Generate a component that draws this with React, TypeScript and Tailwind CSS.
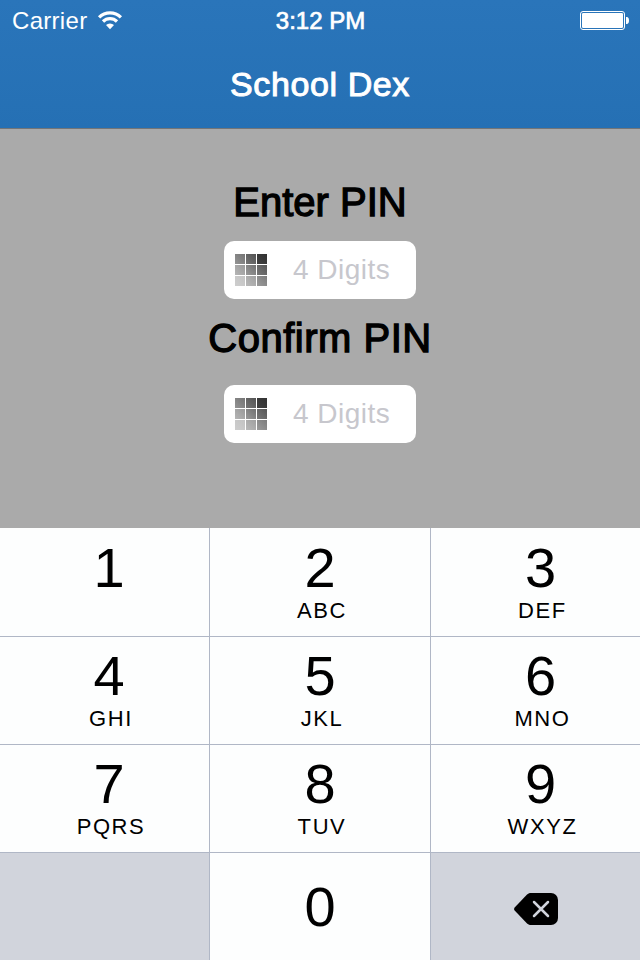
const keys = [
    [
        { digit: '1', letters: '' },
        { digit: '2', letters: 'ABC' },
        { digit: '3', letters: 'DEF' },
    ],
    [
        { digit: '4', letters: 'GHI' },
        { digit: '5', letters: 'JKL' },
        { digit: '6', letters: 'MNO' },
    ],
    [
        { digit: '7', letters: 'PQRS' },
        { digit: '8', letters: 'TUV' },
        { digit: '9', letters: 'WXYZ' },
    ],
];

const columnStyles = ['pl-[9px]', 'border-x border-[#b0b7c6]', 'pl-[10px]'];

const tiles = ['#747474', '#535353', '#323232', '#999999', '#717171', '#575757', '#c3c3c3', '#a0a0a0', '#7c7c7c'];
const tilesEnd = ['#949494', '#747474', '#414141', '#b5b5b5', '#999999', '#777777', '#cecece', '#b9b9b9', '#9b9b9b'];

function WifiIcon() {
    return (
        <svg width="26" height="20" viewBox="0 0 26 20" fill="none" stroke="white" strokeWidth="3.2">
            <path d="M2.1 7.3a15.4 15.4 0 0 1 21.8 0" />
            <path d="M6 11.5a9.9 9.9 0 0 1 14 0" />
            <path d="M13 19.2l-4-4.1a5.7 5.7 0 0 1 8 0z" fill="white" stroke="none" />
        </svg>
    );
}

function BatteryIcon() {
    return (
        <svg width="50" height="20" viewBox="0 0 50 20" fill="none">
            <rect x="0.5" y="0.5" width="44" height="18" rx="2.5" stroke="white" />
            <rect x="2" y="2" width="41" height="15" rx="1.2" fill="white" />
            <path d="M46 6h.8c1.4 0 2.2 1.4 2.2 3.5s-.8 3.5-2.2 3.5H46z" fill="white" />
        </svg>
    );
}

function KeypadIcon() {
    return (
        <svg width="32" height="32" viewBox="0 0 32 32">
            {tiles.map((color, i) => (
                <g key={i}>
                    <linearGradient id={`tile${i}`} x1="1" y1="0" x2="0" y2="1">
                        <stop offset="0" stopColor={color} />
                        <stop offset="1" stopColor={tilesEnd[i]} />
                    </linearGradient>
                    <rect x={(i % 3) * 11} y={Math.floor(i / 3) * 11} width="10" height="10" fill={`url(#tile${i})`} />
                </g>
            ))}
        </svg>
    );
}

function DeleteIcon() {
    return (
        <svg width="44" height="32" viewBox="0 0 44 32" fill="none">
            <path d="M17 0h20a7 7 0 0 1 7 7v18a7 7 0 0 1-7 7H17c-1.7 0-3-.6-4.2-1.8L.9 17.8c-1.1-1.2-1.1-2.4 0-3.6L12.8 1.8C14 .6 15.3 0 17 0z" fill="black" />
            <path d="M20 9l14 14M34 9L20 23" stroke="#d1d4dc" strokeWidth="2.5" strokeLinecap="round" />
        </svg>
    );
}

function PinField() {
    return (
        <label className="flex h-[58px] w-48 items-center rounded-[10px] bg-white pl-[11px]">
            <KeypadIcon />
            <input
                type="text"
                inputMode="numeric"
                maxLength={4}
                placeholder="4 Digits"
                className="ml-[26px] h-10 w-28 bg-transparent text-[28px] tracking-[0.5px] text-black outline-none placeholder:text-[#c7c7cd]"
            />
        </label>
    );
}

export default function App() {
    return (
        <div className="flex h-[960px] w-[640px] flex-col overflow-hidden bg-[#aaaaaa] font-['Liberation_Sans',Arial,sans-serif] text-black">
            <header className="h-[129px] border-b border-[#737577] bg-linear-to-b from-[#2a75ba] to-[#2570b4] text-white">
                <div className="grid h-10 grid-cols-3 items-center px-3">
                    <div className="flex items-center">
                        <span className="pt-[2px] text-[24px] tracking-[0.3px]">Carrier</span>
                        <span className="ml-[10px]">
                            <WifiIcon />
                        </span>
                    </div>
                    <span className="pt-[2px] pl-px text-center text-[24px] [-webkit-text-stroke:0.7px]">3:12 PM</span>
                    <div className="-mr-[2px] flex justify-end pt-[2px]">
                        <BatteryIcon />
                    </div>
                </div>
                <h1 className="pt-6 text-center text-[34px] leading-10 tracking-[0.6px] [-webkit-text-stroke:1px]">School Dex</h1>
            </header>

            <main className="flex h-[399px] flex-col items-center">
                <h2 className="mt-[49px] text-[40px] leading-12 [-webkit-text-stroke:1.3px]">Enter PIN</h2>
                <div className="mt-[15px]">
                    <PinField />
                </div>
                <h2 className="mt-[15px] text-[40px] leading-12 tracking-[0.5px] [-webkit-text-stroke:1.3px]">Confirm PIN</h2>
                <div className="mt-[23px]">
                    <PinField />
                </div>
            </main>

            <div className="h-[432px] bg-[#fdfefe]">
                {keys.map((row, r) => (
                    <div
                        key={r}
                        className={`grid h-27 grid-cols-[209px_222px_209px] ${r === 0 ? '' : 'border-t border-[#b0b7c6]'}`}
                    >
                        {row.map(({ digit, letters }, c) => (
                            <button key={digit} className={`flex flex-col items-center ${r === 0 ? 'pt-3' : 'pt-[11px]'} ${columnStyles[c]}`}>
                                <span className="text-[56px] leading-14">{digit}</span>
                                <span className="mt-[3px] pl-1 text-[22px] leading-6 tracking-[1.6px]">{letters}</span>
                            </button>
                        ))}
                    </div>
                ))}
                <div className="grid h-27 grid-cols-[209px_222px_209px] border-t border-[#b0b7c6]">
                    <div className="bg-[#d1d4dc]" />
                    <button className="flex justify-center border-x border-[#b0b7c6] pt-[26px]">
                        <span className="text-[56px] leading-14">0</span>
                    </button>
                    <button aria-label="Delete" className="flex items-center justify-center bg-[#d1d4dc] pt-[5px]">
                        <DeleteIcon />
                    </button>
                </div>
            </div>
        </div>
    );
}
